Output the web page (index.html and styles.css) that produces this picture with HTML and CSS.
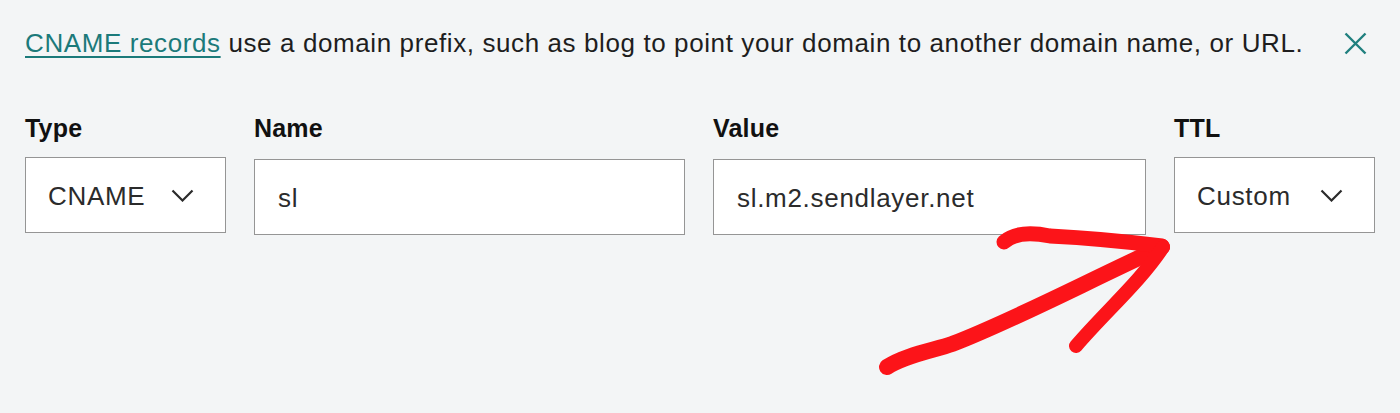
FILE: index.html
```html
<!DOCTYPE html>
<html lang="en">
<head>
<meta charset="utf-8">
<title>CNAME record</title>
<link rel="stylesheet" href="styles.css">
</head>
<body>
<main class="panel">
  <div class="notice">
    <p class="notice-text"><a class="notice-link" href="#">CNAME records</a> use a domain prefix, such as blog to point your domain to another domain name, or URL.</p>
    <button class="close" type="button" aria-label="Close">
      <svg width="23" height="23" viewBox="0 0 23 23"><path d="M1.5 1.5 L21.5 21.5 M21.5 1.5 L1.5 21.5" stroke="#1f7f7e" stroke-width="2.4" fill="none"/></svg>
    </button>
  </div>
  <div class="fields">
    <div class="field">
      <label class="field-label">Type</label>
      <div class="box select">
        <span class="box-text">CNAME</span>
        <svg class="chev" width="23" height="13" viewBox="0 0 23 13"><path d="M1.5 1.5 L11.5 11.5 L21.5 1.5" stroke="#2b2b2b" stroke-width="2.2" fill="none"/></svg>
      </div>
    </div>
    <div class="field">
      <label class="field-label">Name</label>
      <div class="box input"><span class="box-text">sl</span></div>
    </div>
    <div class="field">
      <label class="field-label">Value</label>
      <div class="box input"><span class="box-text">sl.m2.sendlayer.net</span></div>
    </div>
    <div class="field">
      <label class="field-label">TTL</label>
      <div class="box select">
        <span class="box-text">Custom</span>
        <svg class="chev" width="23" height="13" viewBox="0 0 23 13"><path d="M1.5 1.5 L11.5 11.5 L21.5 1.5" stroke="#2b2b2b" stroke-width="2.2" fill="none"/></svg>
      </div>
    </div>
  </div>
  <svg class="arrow" width="1400" height="413" viewBox="0 0 1400 413" aria-hidden="true">
    <g stroke="#fc1419" fill="none" stroke-linecap="round" stroke-linejoin="round">
      <path d="M887 367 C905 355 935 350 952 344 C1010 322 1080 285 1162 247" stroke-width="16"/>
      <path d="M1004 242 C1015 232 1035 233 1050 236 C1090 238 1130 242 1162 246" stroke-width="15"/>
      <path d="M1163 247 C1140 282 1105 312 1076 346" stroke-width="14"/>
    </g>
  </svg>
</main>
</body>
</html>
```

FILE: styles.css
```css
* { box-sizing: border-box; }
html, body { margin: 0; padding: 0; }
body {
  background: #f3f5f6;
  font-family: "Liberation Sans", Arial, sans-serif;
  color: #1e1e1e;
  width: 1400px;
  height: 413px;
  overflow: hidden;
}
.panel {
  position: relative;
  height: 413px;
  padding: 28px 25px 0 25px;
}
.notice {
  display: flex;
  align-items: center;
  justify-content: space-between;
  height: 30px;
}
.notice-text {
  margin: 0;
  font-size: 26px;
  letter-spacing: 0.6px;
  line-height: 30px;
  color: #1e1e1e;
  white-space: nowrap;
}
.notice-link {
  color: #1b7a7a;
  text-decoration: underline;
  text-underline-offset: 4px;
  text-decoration-thickness: 1.5px;
}
.close {
  border: 0;
  background: none;
  padding: 0;
  margin-right: 8px;
  width: 23px;
  height: 23px;
  display: flex;
}
.fields {
  display: grid;
  grid-template-columns: 201px 431px 433px 201px;
  column-gap: 28px;
  margin-top: 55px;
}
.field {
  display: flex;
  flex-direction: column;
}
.field-label {
  font-weight: 700;
  font-size: 25px;
  letter-spacing: 0.2px;
  line-height: 30px;
  color: #111;
  margin-bottom: 14px;
}
.box {
  height: 76px;
  background: #fff;
  border: 1px solid #959595;
  display: flex;
  align-items: center;
  padding: 0 23px;
}
.input { margin-top: 2px; }
.select {
  justify-content: space-between;
  padding-right: 31px;
  padding-left: 22px;
}
.box-text {
  font-size: 26px;
  letter-spacing: 0.7px;
  line-height: 30px;
  padding-top: 2px;
  color: #2b2b2b;
}
.chev { display: block; }
.arrow {
  position: absolute;
  left: 0;
  top: 0;
  pointer-events: none;
}
```
